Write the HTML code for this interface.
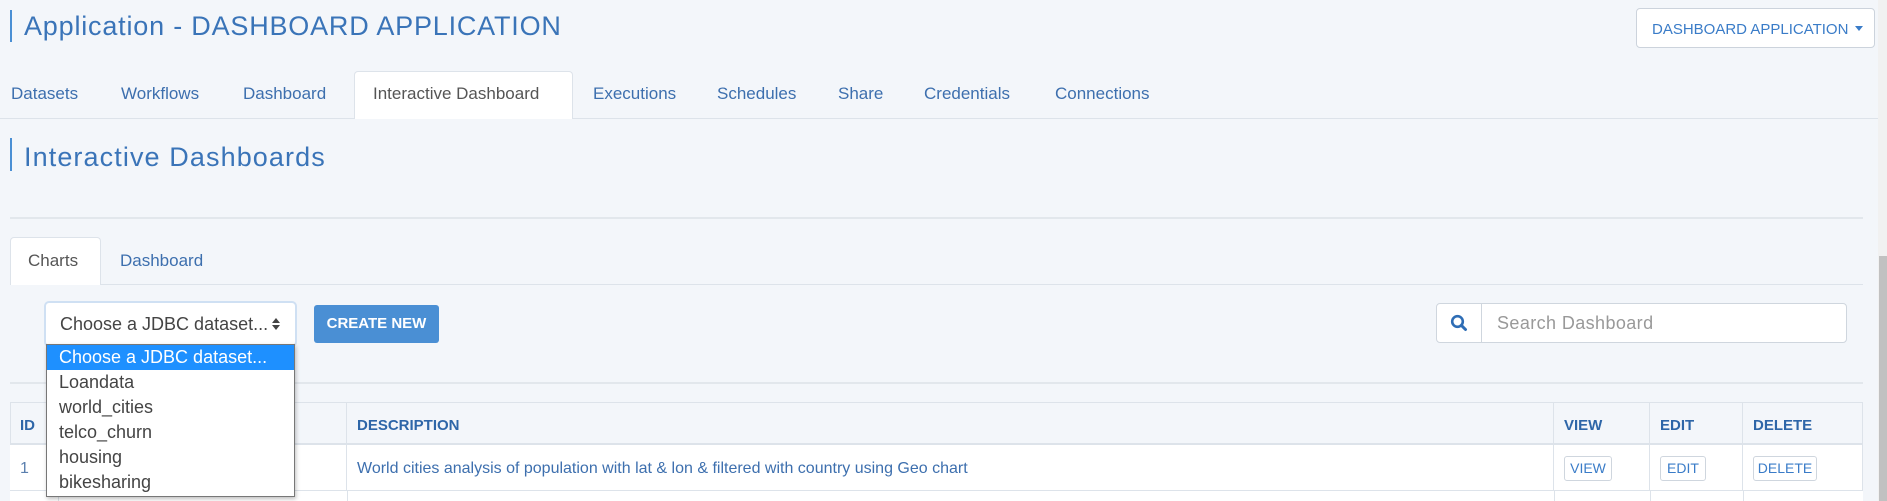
<!DOCTYPE html>
<html><head><meta charset="utf-8"><style>
*{box-sizing:border-box;margin:0;padding:0}
body{width:1887px;height:501px;overflow:hidden;background:#f3f6fa;font-family:"Liberation Sans",sans-serif;position:relative;color:#3a6fb0}
.a{position:absolute}
.bar{position:absolute;width:2px;background:#4a8fd4}
.h{font-size:27px;color:#3a74b8;white-space:nowrap;letter-spacing:0.8px}
.tab{position:absolute;top:84px;font-size:17px;color:#3d6fae;white-space:nowrap}
.line{position:absolute;height:1px;background:#dde3ea}
.th{position:absolute;top:402px;height:43px;border-right:1px solid #dde3ea;font-size:15px;font-weight:bold;color:#2e66a8;padding:15px 0 0 10px}
.td{position:absolute;top:445px;height:45px;border-right:1px solid #dde3ea;background:#fff;font-size:16px;color:#3d6fae;padding:15px 0 0 10px}
.btn{position:absolute;top:456px;height:25px;border:1px solid #cfd6de;border-radius:3px;background:#fff;font-size:14px;color:#3a7cc8;text-align:center;line-height:23px}
.opt{position:absolute;left:1px;width:247px;height:25px;font-size:18px;color:#444;padding-left:12px;line-height:25px}
</style></head><body>
<div class="bar" style="left:10px;top:10px;height:32px"></div>
<div class="a h" style="left:24px;top:11px">Application - DASHBOARD APPLICATION</div>
<div class="a" style="left:1636px;top:8px;width:239px;height:40px;background:#fff;border:1px solid #ccd3dc;border-radius:4px;font-size:15px;color:#3a7cc8;padding:12px 0 0 15px;white-space:nowrap">DASHBOARD APPLICATION <span style="display:inline-block;border-left:4px solid transparent;border-right:4px solid transparent;border-top:5px solid #3a7cc8;vertical-align:3px;margin-left:2px"></span></div>

<div class="line" style="left:0;top:118px;width:1878px"></div>
<div class="a" style="left:354px;top:71px;width:219px;height:48px;background:#fff;border:1px solid #dde3ea;border-bottom:none;border-radius:4px 4px 0 0"></div>
<div class="tab" style="left:11px">Datasets</div>
<div class="tab" style="left:121px">Workflows</div>
<div class="tab" style="left:243px">Dashboard</div>
<div class="tab" style="left:373px;color:#555">Interactive Dashboard</div>
<div class="tab" style="left:593px">Executions</div>
<div class="tab" style="left:717px">Schedules</div>
<div class="tab" style="left:838px">Share</div>
<div class="tab" style="left:924px">Credentials</div>
<div class="tab" style="left:1055px">Connections</div>

<div class="bar" style="left:10px;top:138px;height:33px"></div>
<div class="a h" style="left:24px;top:142px;letter-spacing:1.1px">Interactive Dashboards</div>
<div class="line" style="left:10px;top:217px;width:1853px;height:2px;background:#e2e7ec"></div>

<div class="line" style="left:10px;top:284px;width:1853px"></div>
<div class="a" style="left:10px;top:237px;width:91px;height:48px;background:#fff;border:1px solid #dde3ea;border-bottom:none;border-radius:4px 4px 0 0"></div>
<div class="tab" style="left:28px;top:251px;color:#555">Charts</div>
<div class="tab" style="left:120px;top:251px">Dashboard</div>

<div class="a" style="left:44px;top:301px;width:253px;height:46px;border:2px solid #cfe0f3;border-radius:5px;background:#fff"></div>
<div class="a" style="left:60px;top:314px;font-size:18px;color:#444;white-space:nowrap">Choose a JDBC dataset...</div>
<div class="a" style="left:272px;top:318px;width:0;height:0;border-left:4px solid transparent;border-right:4px solid transparent;border-bottom:5px solid #444"></div>
<div class="a" style="left:272px;top:325px;width:0;height:0;border-left:4px solid transparent;border-right:4px solid transparent;border-top:5px solid #444"></div>
<div class="a" style="left:314px;top:305px;width:125px;height:38px;background:#4a8fd4;border-radius:3px;color:#fff;font-weight:bold;font-size:15px;text-align:center;line-height:38px">CREATE NEW</div>

<div class="a" style="left:1436px;top:303px;width:411px;height:40px;background:#fff;border:1px solid #cfd6de;border-radius:4px"></div>
<div class="a" style="left:1481px;top:304px;width:1px;height:38px;background:#cfd6de"></div>
<svg class="a" style="left:1450px;top:314px" width="18" height="18" viewBox="0 0 18 18"><circle cx="7.5" cy="7.5" r="5.3" fill="none" stroke="#2e6db5" stroke-width="2.6"/><line x1="11.3" y1="11.3" x2="15.5" y2="15.5" stroke="#2e6db5" stroke-width="3" stroke-linecap="round"/></svg>
<div class="a" style="left:1497px;top:313px;font-size:18px;color:#999;letter-spacing:0.4px">Search Dashboard</div>

<div class="line" style="left:10px;top:382px;width:1853px;height:2px;background:#e2e7ec"></div>

<div class="a" style="left:10px;top:402px;width:1853px;height:99px;border:1px solid #dde3ea;border-bottom:none"></div>
<div class="line" style="left:10px;top:443px;width:1853px;height:2px"></div>
<div class="line" style="left:10px;top:490px;width:1853px"></div>
<div class="th" style="left:10px;width:48px">ID</div>
<div class="th" style="left:58px;width:289px"></div>
<div class="th" style="left:347px;width:1207px">DESCRIPTION</div>
<div class="th" style="left:1554px;width:96px">VIEW</div>
<div class="th" style="left:1650px;width:93px">EDIT</div>
<div class="th" style="left:1743px;width:120px">DELETE</div>
<div class="td" style="left:10px;width:48px;color:#5a7fae">1</div>
<div class="td" style="left:58px;width:289px"></div>
<div class="td" style="left:347px;width:1207px">World cities analysis of population with lat &amp; lon &amp; filtered with country using Geo chart</div>
<div class="td" style="left:1554px;width:96px"></div>
<div class="td" style="left:1650px;width:93px"></div>
<div class="td" style="left:1743px;width:120px"></div>
<div class="btn" style="left:1564px;width:48px">VIEW</div>
<div class="btn" style="left:1660px;width:46px">EDIT</div>
<div class="btn" style="left:1753px;width:64px">DELETE</div>
<div class="a" style="left:10px;top:491px;width:1853px;height:10px;background:#fff"></div>
<div class="a" style="left:58px;top:491px;width:1px;height:10px;background:#dde3ea"></div>
<div class="a" style="left:347px;top:491px;width:1px;height:10px;background:#dde3ea"></div>
<div class="a" style="left:1554px;top:491px;width:1px;height:10px;background:#dde3ea"></div>
<div class="a" style="left:1650px;top:491px;width:1px;height:10px;background:#dde3ea"></div>
<div class="a" style="left:1743px;top:491px;width:1px;height:10px;background:#dde3ea"></div>

<div class="a" style="left:46px;top:344px;width:249px;height:153px;background:#fff;border:1px solid #777;box-shadow:1px 2px 4px rgba(0,0,0,.25)">
<div class="opt" style="top:0;left:0;width:247px;background:#1e90ff;color:#fff">Choose a JDBC dataset...</div>
<div class="opt" style="top:25px;left:0">Loandata</div>
<div class="opt" style="top:50px;left:0">world_cities</div>
<div class="opt" style="top:75px;left:0">telco_churn</div>
<div class="opt" style="top:100px;left:0">housing</div>
<div class="opt" style="top:125px;left:0">bikesharing</div>
</div>

<div class="a" style="left:1878px;top:0;width:9px;height:501px;background:#f1f1f1"></div>
<div class="a" style="left:1879px;top:256px;width:8px;height:245px;background:#c1c1c1"></div>
</body></html>
